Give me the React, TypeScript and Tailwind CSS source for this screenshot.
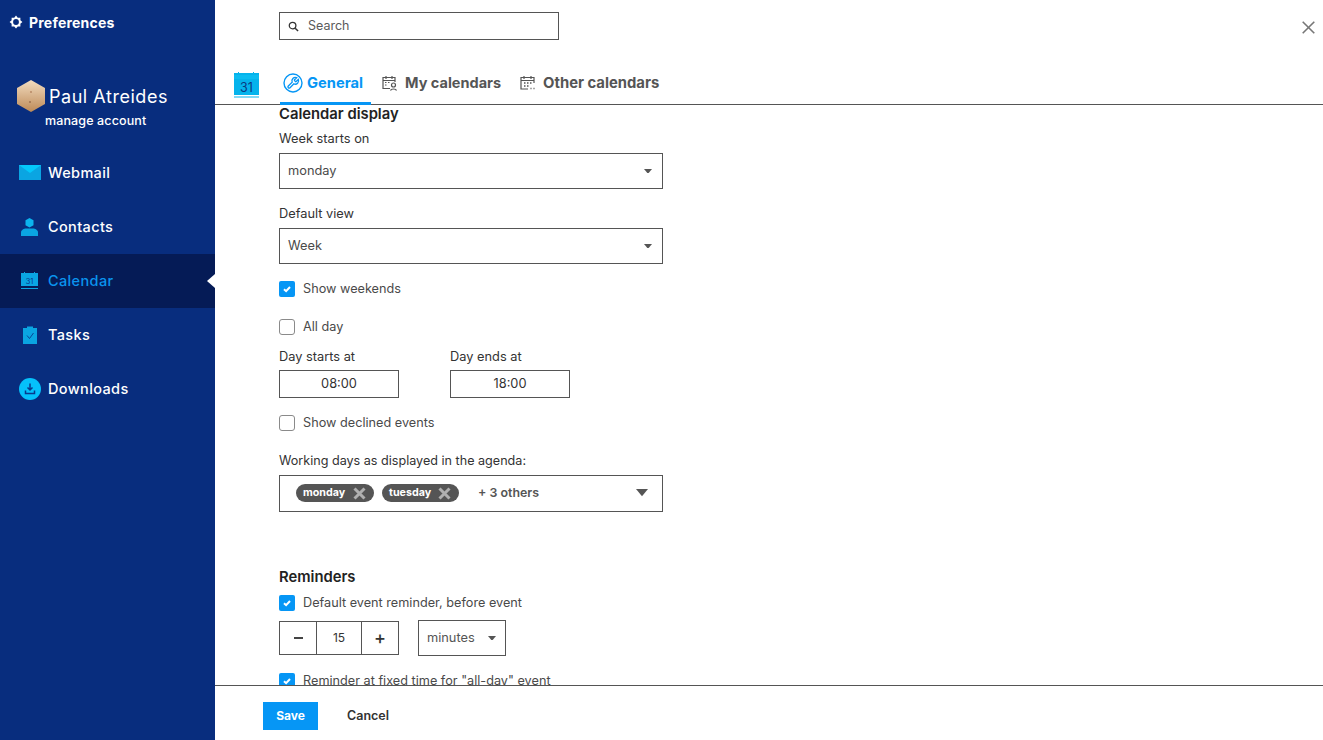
import React from "react";

function Nav({ label, active, children }: { label: string; active?: boolean; children: React.ReactNode }) {
  return (
    <div className={active ? "relative flex h-[54px] items-center bg-[#051b56]" : "relative flex h-[54px] items-center"}>
      <div className="flex w-[48px] shrink-0 justify-center pl-[11px]">{children}</div>
      <span className={active ? "text-[14.5px] font-medium tracking-[0.025em] text-[#0a94ee]" : "text-[14.5px] font-medium tracking-[0.025em] text-white"}>{label}</span>
      {active && <div className="absolute right-0 top-[20px] h-0 w-0 border-y-[7px] border-r-[8px] border-y-transparent border-r-white" />}
    </div>
  );
}

function Check({ checked, label, className }: { checked?: boolean; label: string; className?: string }) {
  return (
    <div className={"flex h-[16px] items-center gap-[8px] " + (className ?? "")}>
      {checked ? (
        <div className="flex h-[16px] w-[16px] items-center justify-center rounded-[2px] bg-[#0696f5]">
          <svg width="10" height="10" viewBox="0 0 10 10"><path d="M2 5.2l2.1 2L8 3" fill="none" stroke="#fff" strokeWidth="2" /></svg>
        </div>
      ) : (
        <div className="h-[16px] w-[16px] rounded-[3px] border border-[#8a8a8a] bg-white" />
      )}
      <span className="text-[12.7px] text-[#4a4a4a]">{label}</span>
    </div>
  );
}

function Caret({ s = 8 }: { s?: number }) {
  return <svg width={s} height={s * 0.6} viewBox="0 0 10 6"><path d="M0 0h10L5 6z" fill="#555" /></svg>;
}

function Select({ value, className }: { value: string; className?: string }) {
  return (
    <div className={"flex h-[36px] w-[384px] items-center justify-between border border-[#555] pl-[8px] pr-[10px] text-[12.8px] text-[#4a4a4a] " + (className ?? "")}>
      <span>{value}</span>
      <Caret />
    </div>
  );
}

function Chip({ label, w }: { label: string; w: string }) {
  return (
    <div className={"flex h-[18px] items-center justify-between rounded-full bg-[#555] pl-[7px] pr-[8px] " + w}>
      <span className="text-[10.7px] font-bold text-white">{label}</span>
      <svg width="13" height="13" viewBox="0 0 13 13"><path d="M1.5 1.5l10 10M11.5 1.5l-10 10" stroke="#b0b0b0" strokeWidth="3" /></svg>
    </div>
  );
}

export default function App() {
  return (
    <div className="flex h-[740px] w-[1323px] overflow-hidden bg-white font-['Inter','Liberation_Sans',sans-serif]">
      <aside className="flex w-[215px] shrink-0 flex-col bg-[#082d7e]">
        <div className="flex h-[44px] items-center gap-[6px] pl-[9px] text-[14px] font-bold tracking-[0.015em] text-white">
          <svg width="14" height="14" viewBox="0 0 24 24"><path d="M12 1l3 3.5h4.500V9l3.500 3-3.500 3v4.500H15L12 23l-3-3.500H4.500V15L1 12l3.500-3V4.500H9z" fill="#fff" /><circle cx="12" cy="12" r="5" fill="#082d7e" /></svg>
          Preferences
        </div>
        <div className="mt-[36px] flex items-center pl-[17px]">
          <svg width="28" height="32" viewBox="0 0 28 32">
            <defs><linearGradient id="av" x1="0" y1="0" x2="0" y2="1"><stop offset="0" stopColor="#f2dcc0" /><stop offset="1" stopColor="#bd8a57" /></linearGradient></defs>
            <path d="M14 0l14 8v16l-14 8-14-8V8z" fill="url(#av)" />
            <circle cx="14" cy="12" r="1" fill="#b98a66" /><circle cx="13" cy="22" r="1" fill="#9c7250" />
          </svg>
          <span className="ml-[4px] text-[18px] tracking-[0.03em] text-white">Paul Atreides</span>
        </div>
        <div className="pl-[45px] text-[12.5px] font-medium tracking-[0.01em] text-white">manage account</div>
        <nav className="mt-[15px] flex flex-col">
          <Nav label="Webmail">
            <svg width="22" height="15" viewBox="0 0 22 15"><path d="M0 0h22v15H0z" fill="#0aa5e2" /><path d="M0 0h22L11 8z" fill="#04c8fb" /></svg>
          </Nav>
          <Nav label="Contacts">
            <svg width="17" height="18" viewBox="0 0 17 18"><path d="M8.5 0l4 2.200v5l-4 2.300-4-2.300v-5z" fill="#0cb4ee" /><path d="M0 18v-3.500C0 12 3 10.500 5 10.500h7c2 0 5 1.500 5 4V18z" fill="#0aa5e2" /></svg>
          </Nav>
          <Nav active label="Calendar">
            <svg width="17" height="17" viewBox="0 0 17 17"><path d="M0 1h3V0h1v1h9V0h1v1h3v13H0z" fill="#0aa5e2" /><path d="M0 16h17v1H0z" fill="#0aa5e2" /><text x="8.5" y="12" textAnchor="middle" fontSize="7.5" fill="#083a8c">31</text></svg>
          </Nav>
          <Nav label="Tasks">
            <svg width="14" height="18" viewBox="0 0 14 18"><path d="M0 2h4V.5h6V2h4v16H0z" fill="#0aa5e2" /><path d="M4 9.500l2.500 3L10.500 7" fill="none" stroke="#083a8c" strokeWidth="0.9" /></svg>
          </Nav>
          <Nav label="Downloads">
            <svg width="22" height="22" viewBox="0 0 22 22"><circle cx="11" cy="11" r="11" fill="#05c1fb" /><path d="M11 5.500v6M8.500 9.500l2.500 2.500 2.500-2.500" fill="none" stroke="#083a8c" strokeWidth="1.5" /><path d="M6.500 12.500v3h9v-3" fill="none" stroke="#083a8c" strokeWidth="1.5" /></svg>
          </Nav>
        </nav>
      </aside>

      <main className="flex min-w-0 flex-1 flex-col">
        <header className="h-[105px] shrink-0 border-b border-[#555]">
          <div className="flex items-start justify-between pl-[64px] pr-[8px] pt-[12px]">
            <div className="flex h-[28px] w-[280px] items-center gap-[9px] border border-[#555] pl-[8px] text-[12.5px] text-[#5a5a5a]">
              <svg width="11" height="11" viewBox="0 0 12 12"><circle cx="5" cy="5" r="3.6" fill="none" stroke="#333" strokeWidth="1.4" /><path d="M7.800 7.800L11 11" stroke="#333" strokeWidth="1.6" /></svg>
              Search
            </div>
            <svg className="mt-[9px]" width="13" height="13" viewBox="0 0 13 13"><path d="M.7.7l11.600 11.600M12.300.7L.7 12.300" stroke="#777" strokeWidth="1.6" /></svg>
          </div>
          <div className="mt-[30px] flex h-[35px] items-stretch pl-[19px]">
            <svg className="mt-[2px]" width="25" height="26" viewBox="0 0 25 26"><path d="M0 1h4V0h1v1h14V0h1v1h5v22H0z" fill="#05b3ec" /><path d="M0 3h25v4H0z" fill="#12c6f5" opacity=".5" /><path d="M0 24.500h25v1H0z" fill="#05b3ec" /><text x="12.5" y="20" textAnchor="middle" fontSize="12.5" fill="#0b3a80">31</text></svg>
            <div className="ml-[21px] flex w-[91px] items-start gap-[4px] border-b-[3px] border-[#0696f5] pl-[3px] pt-[4px]">
              <svg className="-mt-[1px]" width="20" height="20" viewBox="0 0 20 20">
                <circle cx="10" cy="10" r="9" fill="none" stroke="#0696f5" strokeWidth="1.4" />
                <g transform="translate(3.300 3.300) scale(.56)"><path d="M14.700 6.300a1 1 0 0 0 0 1.400l1.600 1.600a1 1 0 0 0 1.400 0l3.770-3.770a6 6 0 0 1-7.940 7.940l-6.910 6.910a2.120 2.120 0 0 1-3-3l6.910-6.910a6 6 0 0 1 7.940-7.940l-3.760 3.760z" fill="none" stroke="#0696f5" strokeWidth="2.4" /></g>
              </svg>
              <span className="text-[14.7px] font-bold leading-[18px] text-[#0696f5]">General</span>
            </div>
            <div className="ml-[11px] flex items-start gap-[7px] pt-[4px]">
              <svg className="mt-[1px]" width="16" height="16" viewBox="0 0 16 16"><path d="M8 13.500H1v-11h12V7M4 1v3M10 1v3M1 5.500h12" fill="none" stroke="#555" strokeWidth="1.2" /><circle cx="11.500" cy="10" r="2" fill="none" stroke="#555" strokeWidth="1.2" /><path d="M8.500 15.500c.5-2 5.500-2 6 0" fill="none" stroke="#555" strokeWidth="1.2" /><path d="M3 7.500h1.500M6 7.500h1.500M3 10h1.500" stroke="#555" /></svg>
              <span className="text-[14.5px] font-bold leading-[18px] text-[#555]">My calendars</span>
            </div>
            <div className="ml-[19px] flex items-start gap-[7px] pt-[4px]">
              <svg className="mt-[1px]" width="16" height="16" viewBox="0 0 16 16"><path d="M8 14H1V2.500h13V8M4 1v3M11 1v3M1 5.500h13" fill="none" stroke="#555" strokeWidth="1.2" /><path d="M4 8h1.500M7 8h1.500M10 8h1.500M4 11h1.500M7 11h1.500M10.500 13.500h1M13.500 13.500h1" stroke="#555" strokeWidth="1.3" /></svg>
              <span className="text-[14.8px] font-bold leading-[18px] text-[#555]">Other calendars</span>
            </div>
          </div>
        </header>

        <section className="min-h-0 flex-1 overflow-hidden pl-[64px] pt-[1px]">
          <h2 className="text-[14.8px] font-semibold leading-[16px] text-[#222]">Calendar display</h2>
          <label className="mt-[9px] block text-[12.8px] leading-[16px] text-[#333]">Week starts on</label>
          <Select value="monday" className="mt-[6px]" />
          <label className="mt-[17px] block text-[12.8px] leading-[16px] text-[#333]">Default view</label>
          <Select value="Week" className="mt-[6px]" />
          <Check checked label="Show weekends" className="mt-[17px]" />
          <Check label="All day" className="mt-[22px]" />
          <div className="mt-[14px] flex gap-[51px]">
            <div>
              <div className="text-[12.8px] leading-[16px] text-[#333]">Day starts at</div>
              <div className="mt-[5px] flex h-[28px] w-[120px] items-center justify-center border border-[#555] text-[12.8px] text-[#333]">08:00</div>
            </div>
            <div>
              <div className="text-[12.8px] leading-[16px] text-[#333]">Day ends at</div>
              <div className="mt-[5px] flex h-[28px] w-[120px] items-center justify-center border border-[#555] text-[12.8px] text-[#333]">18:00</div>
            </div>
          </div>
          <Check label="Show declined events" className="mt-[17px]" />
          <label className="mt-[22px] block text-[12.6px] leading-[16px] text-[#333]">Working days as displayed in the agenda:</label>
          <div className="mt-[6px] flex h-[37px] w-[384px] items-center border border-[#555] pb-[1px] pl-[16px] pr-[14px]">
            <Chip label="monday" w="w-[78px]" />
            <Chip label="tuesday" w="ml-[8px] w-[77px]" />
            <span className="ml-[19px] text-[12.4px] font-semibold text-[#555]">+ 3 others</span>
            <div className="ml-auto"><Caret s={12} /></div>
          </div>
          <h2 className="mt-[57px] text-[14.8px] font-semibold leading-[16px] text-[#222]">Reminders</h2>
          <Check checked label="Default event reminder, before event" className="mt-[10px]" />
          <div className="mt-[9px] flex items-center">
            <div className="flex h-[34px] w-[120px] items-stretch border border-[#555] text-[#333]">
              <div className="flex w-[37px] items-center justify-center border-r border-[#555]"><div className="h-[2px] w-[9px] bg-[#444]" /></div>
              <div className="flex flex-1 items-center justify-center text-[12px]">15</div>
              <div className="flex w-[37px] items-center justify-center border-l border-[#555] text-[18px] font-medium leading-none">+</div>
            </div>
            <div className="ml-[19px] flex h-[36px] w-[88px] items-center justify-between border border-[#555] pl-[8px] pr-[9px] text-[12.8px] text-[#555]">
              minutes <Caret />
            </div>
          </div>
          <Check checked label={'Reminder at fixed time for "all-day" event'} className="mt-[17px]" />
        </section>

        <footer className="flex h-[55px] shrink-0 items-start border-t border-[#555] pl-[48px] pt-[16px]">
          <button className="h-[28px] w-[55px] bg-[#0696f5] text-[12px] font-bold text-white">Save</button>
          <button className="ml-[29px] h-[28px] text-[12.5px] font-semibold text-[#333]">Cancel</button>
        </footer>
      </main>
    </div>
  );
}
